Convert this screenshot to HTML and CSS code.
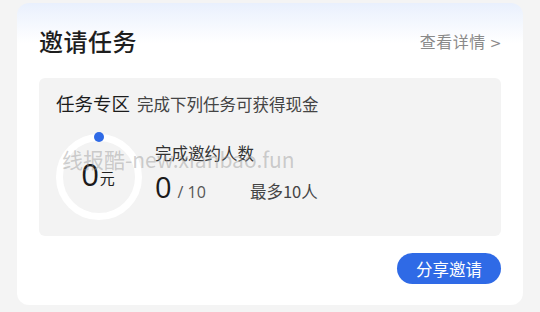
FILE: index.html
```html
<!DOCTYPE html>
<html lang="zh-CN">
<head>
    <meta charset="UTF-8">
    <meta name="viewport" content="width=device-width, initial-scale=1.0">
    <title>邀请任务</title>
    <link rel="stylesheet" href="styles.css">
</head>
<body>
    <div class="card">
        <div class="card-header">
            <h1>邀请任务</h1>
            <a class="more" href="#">查看详情 <span class="arrow">&gt;</span></a>
        </div>

        <div class="task-box">
            <div class="task-title">
                <span class="zone">任务专区</span>
                <span class="desc">完成下列任务可获得现金</span>
            </div>
            <div class="task-body">
                <div class="ring">
                    <span class="dot"></span>
                    <span class="amount">0</span><span class="unit">元</span>
                </div>
                <div class="progress">
                    <div class="label">完成邀约人数</div>
                    <div class="count-row">
                        <span class="count">0</span>
                        <span class="total">/ 10</span>
                        <span class="limit">最多10人</span>
                    </div>
                </div>
            </div>
        </div>

        <div class="actions">
            <button type="button">分享邀请</button>
        </div>

        <div class="watermark">线报酷-new.xianbao.fun</div>
    </div>
</body>
</html>
```

FILE: styles.css
```css
body {
    margin: 0;
    padding: 3px 17px 0;
    background-color: #f4f4f4;
    font-family: "Noto Sans CJK SC", "Noto Sans", sans-serif;
    color: #222;
}
.card {
    position: relative;
    height: 302px;
    box-sizing: border-box;
    padding: 0 22px;
    border-radius: 12px;
    background: linear-gradient(180deg, #e9f0fd 0px, #ffffff 40px);
}
.card-header {
    display: flex;
    align-items: center;
    justify-content: space-between;
    height: 75px;
}
h1 {
    margin: 0 0 1px;
    font-size: 24px;
    font-weight: 500;
    color: #1e1e1e;
    letter-spacing: 0.5px;
}
.more {
    font-size: 16px;
    color: #8a8a8a;
    text-decoration: none;
    margin-right: -1px;
    letter-spacing: 0.5px;
}
.arrow {
    font-family: "DejaVu Sans", sans-serif;
    font-size: 14px;
}
.task-box {
    height: 158px;
    box-sizing: border-box;
    padding: 12px 17px 0;
    border-radius: 6px;
    background-color: #f3f3f3;
}
.task-title {
    display: flex;
    align-items: baseline;
    gap: 7px;
}
.zone {
    font-size: 18.5px;
    color: #1c1c1c;
}
.desc {
    font-size: 16.5px;
    color: #444;
}
.task-body {
    display: flex;
    margin-top: 18px;
}
.ring {
    position: relative;
    display: flex;
    align-items: center;
    justify-content: center;
    width: 86px;
    height: 86px;
    box-sizing: border-box;
    padding-bottom: 5px;
    border: 7px solid #fff;
    border-radius: 50%;
}
.dot {
    position: absolute;
    top: -9px;
    left: 50%;
    width: 10px;
    height: 10px;
    margin-left: -5px;
    border-radius: 50%;
    background-color: #2f6ae6;
}
.amount {
    font-family: "Open Sans", sans-serif;
    font-size: 31px;
    line-height: 1;
    color: #1a1a1a;
    margin-left: -2px;
}
.unit {
    font-size: 15px;
    margin-top: 6px;
    margin-left: 1px;
}
.progress {
    margin-left: 13px;
    padding-top: 7px;
}
.label {
    font-size: 16.5px;
    color: #333;
}
.count-row {
    display: flex;
    align-items: baseline;
    margin-top: 3px;
}
.count {
    font-family: "Open Sans", sans-serif;
    font-size: 29px;
    line-height: 1.3;
    color: #1a1a1a;
}
.total {
    font-family: "Open Sans", sans-serif;
    font-size: 16px;
    color: #555;
    margin-left: 6px;
}
.limit {
    font-size: 16.5px;
    color: #444;
    margin-left: 44px;
}
.actions {
    display: flex;
    justify-content: flex-end;
    margin-top: 17px;
}
button {
    height: 31px;
    padding: 0 19px;
    border: none;
    border-radius: 16px;
    background-color: #2f6ae6;
    color: #fff;
    font-family: "Noto Sans CJK SC", sans-serif;
    font-size: 16.5px;
}
.watermark {
    position: absolute;
    top: 141px;
    left: 45px;
    font-family: "Noto Sans CJK SC", "Noto Sans", sans-serif;
    font-size: 21px;
    color: rgba(150, 150, 150, 0.45);
    pointer-events: none;
}
```
